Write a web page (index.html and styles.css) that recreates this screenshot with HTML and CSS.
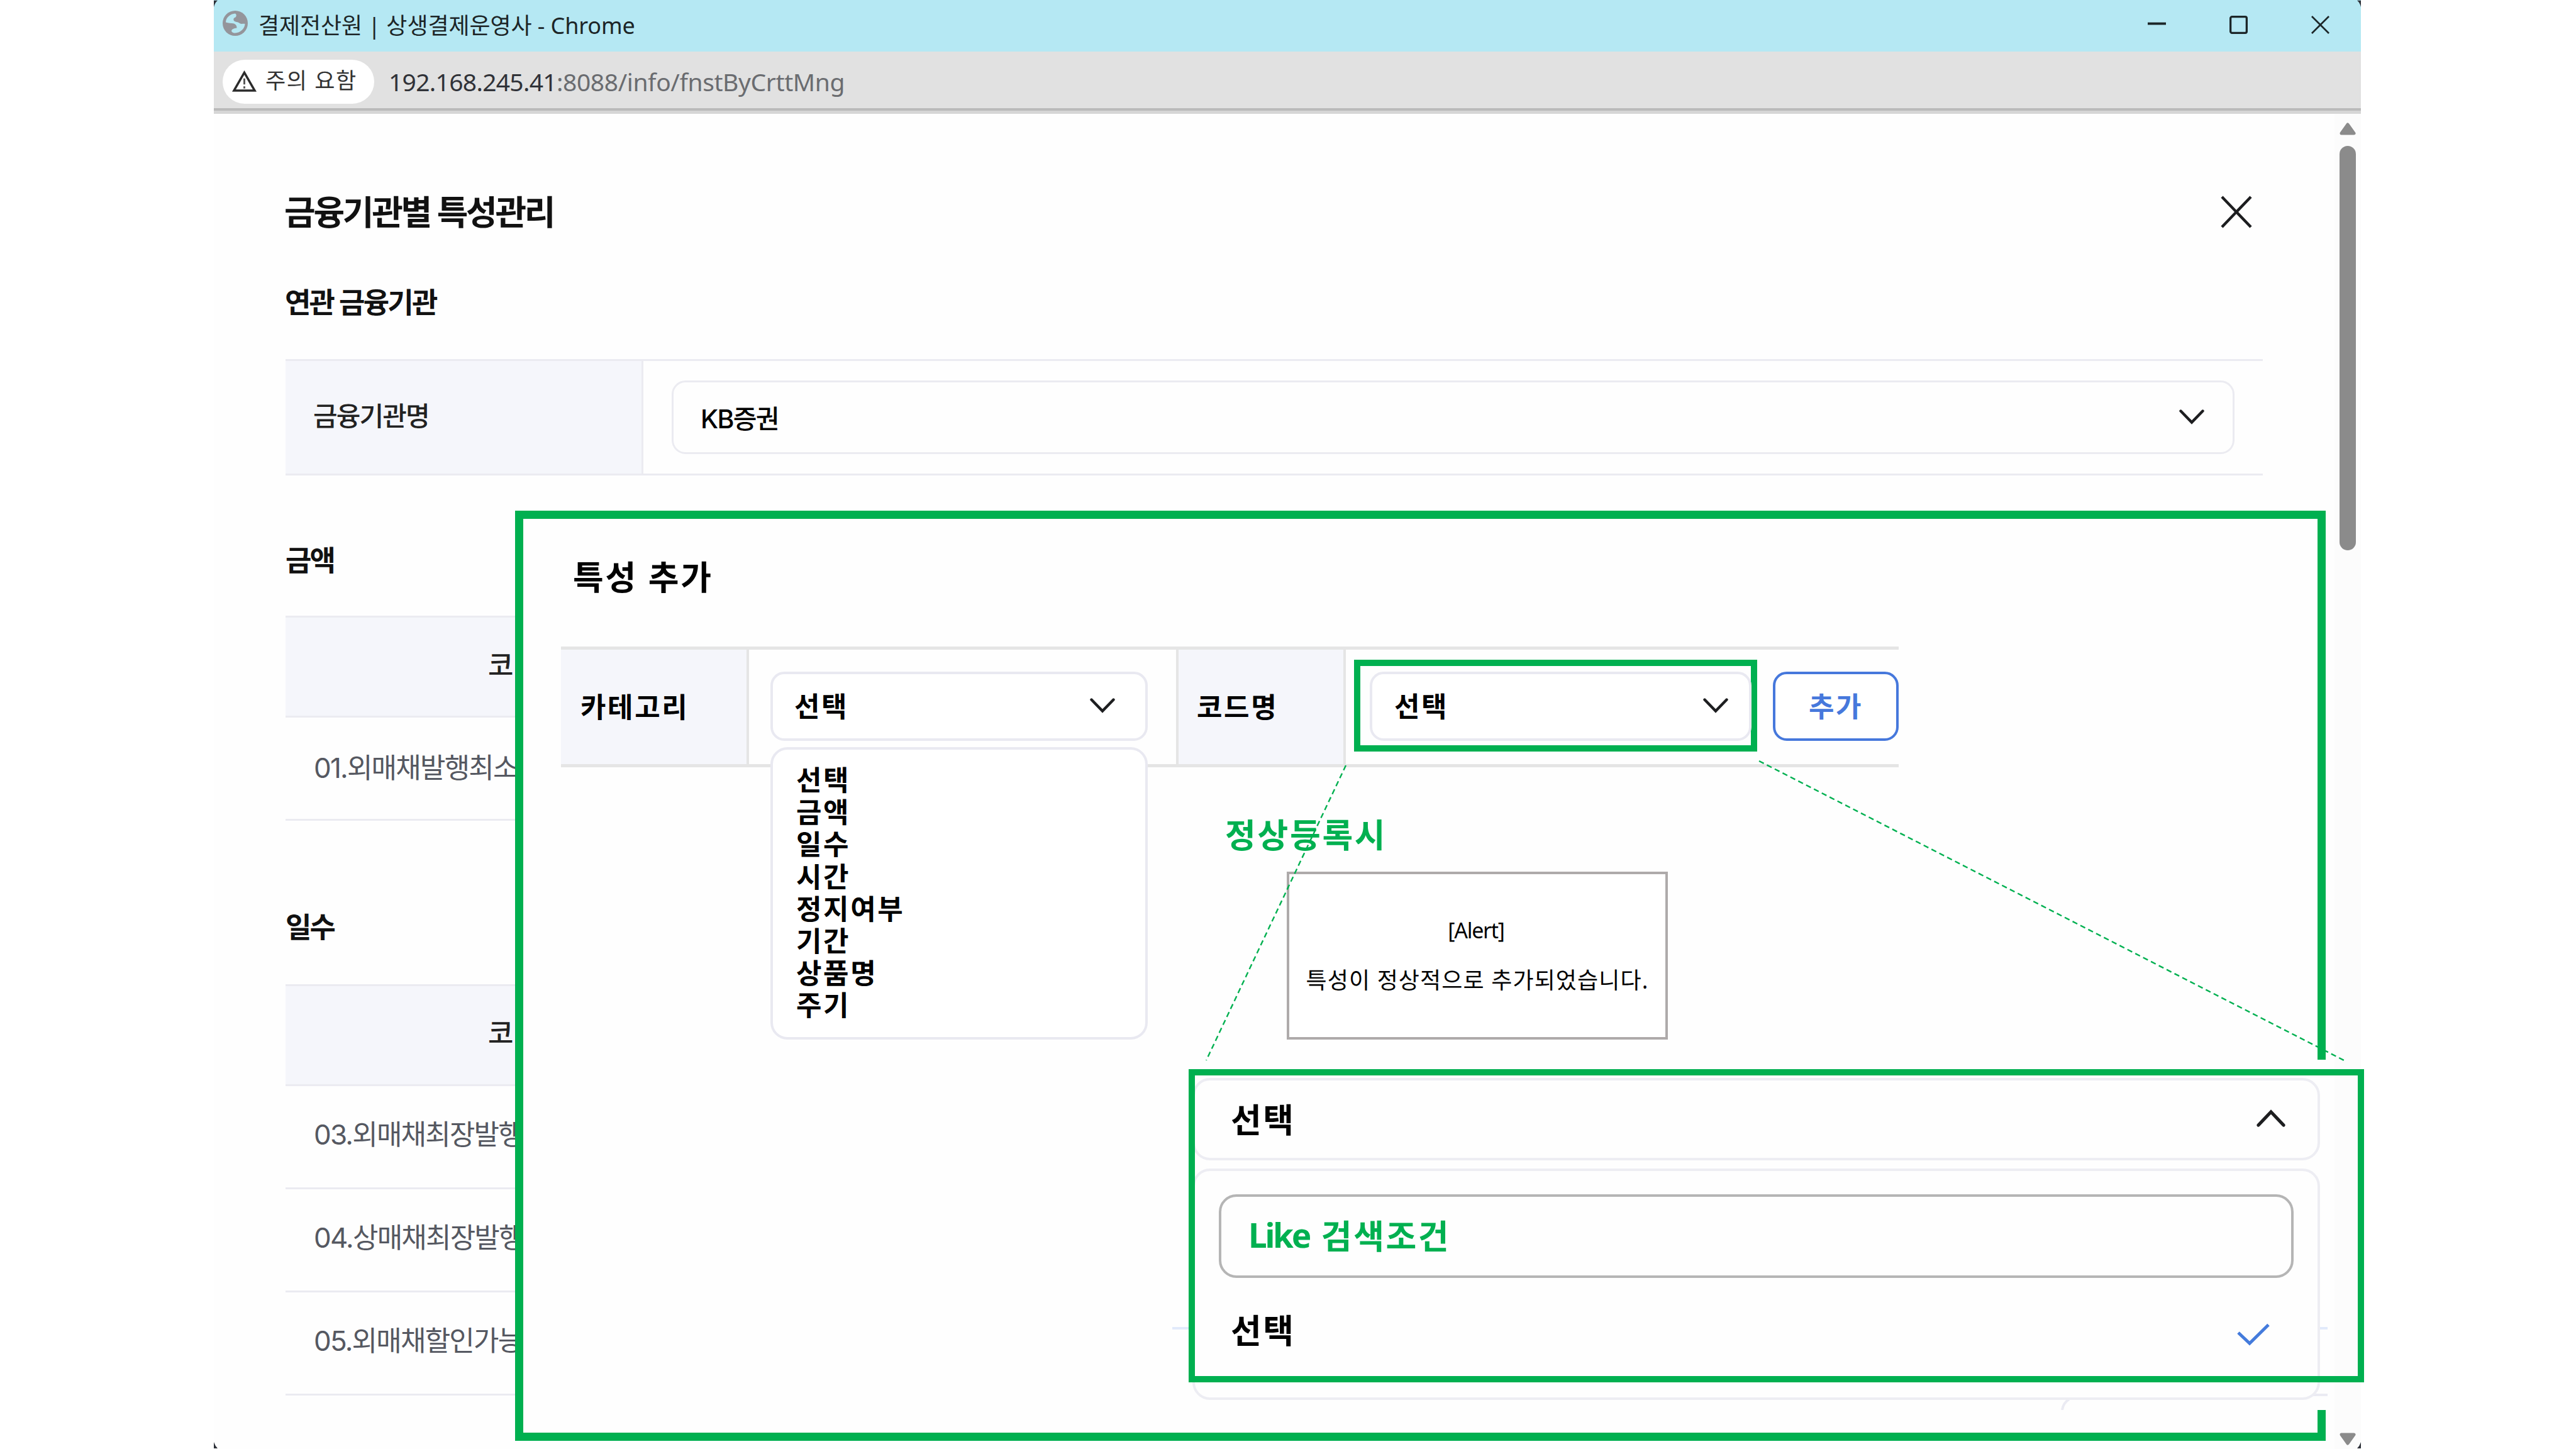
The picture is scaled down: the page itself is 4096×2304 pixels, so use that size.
FILE: index.html
```
<!DOCTYPE html>
<html lang="ko">
<head>
    <meta charset="UTF-8">
    <title>결제전산원 | 상생결제운영사</title>
    <link rel="stylesheet" href="styles.css">
</head>
<body>
    <!-- Browser window -->
    <div class="window">
        <div class="title-bar">
            <svg class="globe" viewBox="0 0 40 40"><circle cx="20" cy="20" r="20" fill="#94959b"/><path d="M20 4.5C12 5 5 11 5 18.5C9 20 14 19.5 18 20.5C22 22 22.500 25 22.500 27.500C18 28 14.500 29 14 32.500C15 35 18 35.500 20 35.500C28 35 35 29 35.500 21C33 20 30 22 27 20C25 17.500 20 18.500 18 16C16.500 13 18 11 20.500 10.500C22 9 22.500 6 20 4.500Z" fill="#b5e8f3"/></svg>
            <span class="window-title">결제전산원 | 상생결제운영사 - Chrome</span>
            <div class="controls">
                <svg viewBox="0 0 30 30"><path d="M0 13H30" stroke-width="4"/></svg>
                <svg viewBox="0 0 30 30"><rect x="1.7" y="1.7" width="26.6" height="26.6" rx="2.5" stroke-width="3.4"/></svg>
                <svg viewBox="0 0 30 30"><path d="M1 1L29 29M29 1L1 29" stroke-width="2.8"/></svg>
            </div>
        </div>
        <div class="address-bar">
            <div class="warn">
                <svg viewBox="0 0 40 35"><path d="M20 3.5L37 33H3Z" fill="none" stroke="#2b2b2b" stroke-width="3.6"/><path d="M20 13V23M20 26V29.5" stroke="#555" stroke-width="3"/></svg>
                <span>주의 요함</span>
            </div>
            <span class="url"><span class="host">192.168.245.41</span><span class="path">:8088/info/fnstByCrttMng</span></span>
        </div>
        <div class="content">
            <div class="page">
                <div class="page-head">
                    <h1>금융기관별 특성관리</h1>
                    <svg class="close" viewBox="0 0 50 52"><path d="M2 2L48 50M48 2L2 50"/></svg>
                </div>
                <h2 class="related">연관 금융기관</h2>
                <div class="form-row">
                    <div class="label">금융기관명</div>
                    <div class="field">
                        <div class="select-box">
                            <span>KB증권</span>
                            <svg class="chevron" viewBox="0 0 40 24"><path d="M2.5 2.5L20 20.5L37.5 2.5"/></svg>
                        </div>
                    </div>
                </div>
                <h2 class="amount">금액</h2>
                <div class="table">
                    <div class="th">코</div>
                    <div class="td">01.외매채발행최소</div>
                </div>
                <h2 class="days">일수</h2>
                <div class="table">
                    <div class="th">코</div>
                    <div class="td">03.외매채최장발행</div>
                    <div class="td">04.상매채최장발행</div>
                    <div class="td">05.외매채할인가능</div>
                </div>
            </div>
            <div class="scrollbar">
                <svg class="arrow" viewBox="0 0 26 20"><path d="M13 3L23 17H3Z"/></svg>
                <div class="thumb"></div>
                <svg class="arrow down" viewBox="0 0 26 20"><path d="M13 17L23 3H3Z"/></svg>
            </div>
        </div>
        <svg class="corner tl" viewBox="0 0 8 14"><path d="M0 0H8Q2 5 0 14Z"/></svg>
        <svg class="corner tr" viewBox="0 0 8 14"><path d="M8 0H0Q6 5 8 14Z"/></svg>
        <svg class="corner bl" viewBox="0 0 6 10"><path d="M0 10H6Q2 6 0 0Z"/></svg>
        <svg class="corner br" viewBox="0 0 6 10"><path d="M6 10H0Q4 6 6 0Z"/></svg>
    </div>

    <!-- Add characteristic panel -->
    <div class="panel">
        <h3>특성 추가</h3>
        <div class="add-row">
            <div class="cell-label category">카테고리</div>
            <div class="cell category-field">
                <div class="select">
                    <span>선택</span>
                    <svg class="chevron" viewBox="0 0 40 24"><path d="M2.5 2.5L20 20.5L37.5 2.5"/></svg>
                </div>
                <ul class="menu">
                    <li>선택</li>
                    <li>금액</li>
                    <li>일수</li>
                    <li>시간</li>
                    <li>정지여부</li>
                    <li>기간</li>
                    <li>상품명</li>
                    <li>주기</li>
                </ul>
            </div>
            <div class="cell-label code">코드명</div>
            <div class="cell code-field">
                <div class="highlight">
                    <div class="select">
                        <span>선택</span>
                        <svg class="chevron" viewBox="0 0 40 24"><path d="M2.5 2.5L20 20.5L37.5 2.5"/></svg>
                    </div>
                </div>
                <button class="add">추가</button>
            </div>
        </div>
        <p class="note">정상등록시</p>
        <div class="alert">
            <p class="alert-title">[Alert]</p>
            <p>특성이 정상적으로 추가되었습니다.</p>
        </div>
    </div>

    <!-- Enlarged code dropdown -->
    <div class="detail">
        <svg class="leftover" viewBox="0 0 1837 557"><path d="M0 427H40M1800 427H1837" stroke="#e2eafb"/><path d="M1800 533H1837M1415 557Q1417 545 1426 540" stroke="#ebebf3"/></svg>
        <div class="detail-select">
            <span>선택</span>
            <svg class="chevron-up" viewBox="0 0 46 28"><path d="M3 25L23 4L43 25"/></svg>
        </div>
        <div class="detail-menu">
            <div class="search"><span class="like">Like </span>검색조건</div>
            <div class="option">
                <span>선택</span>
                <svg class="check" viewBox="0 0 52 36"><path d="M2 15L20 32L50 2.5"/></svg>
            </div>
        </div>
        <div class="detail-frame"></div>
    </div>

    <svg class="guides" viewBox="0 0 4096 2304"><path d="M2140 1217L1918 1686M2797 1210L3727 1686"/></svg>
</body>
</html>
```

FILE: styles.css
```
* {
    box-sizing: border-box;
}

body {
    position: relative;
    width: 4096px;
    height: 2304px;
    margin: 0;
    overflow: hidden;
    background: #fff;
    color: #000;
    font-family: "Noto Sans", "Noto Sans CJK KR", sans-serif;
}

h1, h2, h3, p, ul {
    margin: 0;
    padding: 0;
}

svg {
    display: block;
    flex-shrink: 0;
}

/* Browser window */
.window {
    position: relative;
    width: 3414px;
    height: 2304px;
    margin-left: 340px;
    background: #fefefe;
    display: flex;
    flex-direction: column;
}

.title-bar {
    height: 82px;
    padding: 0 50px 8px 14px;
    display: flex;
    align-items: center;
    background: #b5e8f3;
}

.globe {
    width: 40px;
    height: 40px;
}

.window-title {
    margin-left: 17px;
    margin-top: 7px;
    font-size: 36px;
    line-height: 50px;
    letter-spacing: -0.1px;
    color: #1c2527;
}

.controls {
    margin-left: auto;
    margin-top: 5px;
    display: flex;
    gap: 101px;
}

.controls svg {
    width: 29px;
    height: 29px;
    fill: none;
    stroke: #1c2628;
}

.address-bar {
    height: 99px;
    padding: 13px 0 0 14px;
    display: flex;
    align-items: flex-start;
    background: #e1e1e1;
    border-bottom: 5px solid #d6d6d6;
    box-shadow: inset 0 -4px #bababa;
}

.warn {
    width: 241px;
    height: 70px;
    padding: 0 0 4px 15px;
    display: flex;
    align-items: center;
    border-radius: 35px;
    background: #fff;
}

.warn svg {
    width: 39px;
    height: 34px;
    margin-top: 2px;
}

.warn span {
    margin-left: 14px;
    font-size: 35px;
    line-height: 50px;
    letter-spacing: 1.6px;
    color: #333;
    white-space: nowrap;
}

.url {
    margin-left: 23px;
    font-size: 39px;
    line-height: 70px;
    color: #6a6c70;
}

.host {
    color: #303238;
    letter-spacing: -0.7px;
}

.path {
    letter-spacing: -0.4px;
}

.content {
    flex: 1;
    display: flex;
}

.page {
    width: 3258px;
    padding: 126px 0 0 114px;
}

.page-head {
    display: flex;
    justify-content: space-between;
    padding-right: 17px;
}

h1 {
    margin-left: -2px;
    font-size: 54px;
    line-height: 60px;
    letter-spacing: -3.3px;
    color: #111;
}

.close {
    width: 50px;
    height: 52px;
    margin-top: 4px;
    fill: none;
    stroke: #1c1d1f;
    stroke-width: 4.4;
}

h2 {
    font-size: 45px;
    line-height: 50px;
    letter-spacing: -2.8px;
    color: #111;
}

.related {
    margin: 89px 0 65px -1px;
}

.amount {
    margin: 110px 0 63px;
}

.days {
    margin: 144px 0 66px;
}

.form-row {
    height: 185px;
    display: flex;
    border-top: 3px solid #ebebf1;
    border-bottom: 3px solid #ebebf1;
}

.label {
    width: 569px;
    padding: 0 0 10px 44px;
    display: flex;
    align-items: center;
    background: #f5f6fb;
    border-right: 3px solid #ebebf1;
    font-size: 42px;
    font-weight: 500;
    letter-spacing: -1.9px;
    color: #222;
}

.field {
    flex: 1;
    padding: 31px 45px 31px;
}

.select-box {
    height: 117px;
    padding: 0 45px 1px 43px;
    display: flex;
    align-items: center;
    justify-content: space-between;
    border: 3px solid #ebebf1;
    border-radius: 22px;
    font-family: "Inter", "Noto Sans CJK KR", sans-serif;
    font-size: 41px;
    font-weight: 500;
    letter-spacing: -1.7px;
}

.chevron {
    width: 40px;
    height: 24px;
    fill: none;
    stroke: #1d1e20;
    stroke-width: 4.4;
    stroke-linecap: round;
}

.select-box .chevron {
    margin-top: -1px;
}

.table {
    width: 3144px;
    border-top: 3px solid #ebebf1;
    font-family: "Inter", "Noto Sans CJK KR", sans-serif;
    letter-spacing: -1.8px;
}

.th {
    height: 159px;
    padding: 0 0 10px 322px;
    display: flex;
    align-items: center;
    background: #f5f6fb;
    border-bottom: 3px solid #ebebf1;
    font-size: 44px;
    font-weight: 500;
    color: #222;
}

.td {
    height: 164px;
    padding: 0 0 8px 45px;
    display: flex;
    align-items: center;
    border-bottom: 3px solid #ebebf1;
    font-size: 44px;
    color: #555861;
}

.days + .table .th,
.days + .table .td {
    padding-bottom: 13px;
}

/* Scrollbar */
.scrollbar {
    width: 42px;
    margin-left: auto;
    padding: 14px 8px 6px;
    display: flex;
    flex-direction: column;
    background: #fcfcfc;
}

.arrow {
    width: 26px;
    height: 20px;
    fill: #8b8b8b;
    stroke: #8b8b8b;
    stroke-width: 5;
    stroke-linejoin: round;
}

.thumb {
    height: 643px;
    margin-top: 17px;
    border-radius: 13px;
    background: #8b8b8b;
}

.down {
    margin-top: auto;
}

.corner {
    position: absolute;
    width: 6px;
    height: 12px;
    fill: #2c3038;
}

.tl { top: 0; left: 0; }
.tr { top: 0; right: 0; }
.bl { bottom: 0; left: 0; }
.br { bottom: 0; right: 0; }

/* Add panel, lies over the page */
.panel {
    position: absolute;
    left: 819px;
    top: 812px;
    width: 2879px;
    height: 1479px;
    padding: 63px 0 0 60px;
    border: 13px solid #00b050;
    background: #fefefe;
}

h3 {
    padding-left: 19px;
    font-size: 53px;
    line-height: 60px;
    letter-spacing: 2.8px;
}

.add-row {
    width: 2127px;
    height: 192px;
    margin-top: 80px;
    display: flex;
    border-top: 5px solid #e5e5e5;
    border-bottom: 5px solid #e5e5e5;
    font-size: 44px;
    font-weight: 700;
    letter-spacing: 2.6px;
}

.cell-label {
    padding: 0 0 5px 31px;
    display: flex;
    align-items: center;
    background: #f5f6fb;
    border-right: 4px solid #e5e5e5;
}

.category {
    width: 299px;
}

.category-field {
    position: relative;
    width: 679px;
    padding: 35px 0 0 34px;
}

.code {
    width: 270px;
    padding-left: 29px;
    border-left: 4px solid #e5e5e5;
}

.code-field {
    flex: 1;
    padding: 16px 0 0 13px;
    display: flex;
}

.select {
    width: 600px;
    height: 110px;
    padding: 0 48px 4px 34px;
    display: flex;
    align-items: center;
    justify-content: space-between;
    border: 4px solid #e9e9f1;
    border-radius: 22px;
    background: #fff;
}

.select .chevron {
    margin-top: 2px;
}

.menu {
    position: absolute;
    left: 34px;
    top: 155px;
    width: 600px;
    height: 465px;
    padding: 23px 37px;
    border: 4px solid #e9e9f1;
    border-radius: 27px;
    background: #fff;
    list-style: none;
    line-height: 51.2px;
}

.highlight {
    width: 641px;
    height: 146px;
    padding: 9px 0 0 15px;
    border: 10px solid #00b050;
}

.highlight .select {
    width: 607px;
    padding: 0 33px 4px 35px;
}

.add {
    width: 200px;
    height: 110px;
    margin: 19px 0 0 25px;
    padding: 0 0 5px;
    border: 4px solid #4678dc;
    border-radius: 22px;
    background: #fff;
    color: #4678dc;
    font: inherit;
    letter-spacing: inherit;
}

.note {
    margin: 78px 0 0 1056px;
    font-size: 53px;
    font-weight: 700;
    line-height: 60px;
    letter-spacing: 2.7px;
    color: #00b050;
}

.alert {
    width: 606px;
    height: 267px;
    margin: 28px 0 0 1154px;
    padding-top: 49px;
    border: 4px solid #aeaaaa;
    background: #fff;
    text-align: center;
    font-size: 36px;
    line-height: 80px;
    letter-spacing: 1.1px;
    white-space: nowrap;
}

.alert-title {
    padding-right: 4px;
    font-size: 34px;
    letter-spacing: -1.3px;
}

/* Dropdown detail, lies over the panel and the page */
.detail {
    position: absolute;
    left: 1864px;
    top: 1685px;
    width: 1837px;
    height: 557px;
    padding: 29px 12px 0 32px;
    background: #fefefe;
    font-size: 53px;
    font-weight: 700;
    letter-spacing: 2.6px;
}

.leftover {
    position: absolute;
    left: 0;
    top: 0;
    width: 1837px;
    height: 557px;
    fill: none;
    stroke-width: 4;
}

.detail-select {
    position: relative;
    height: 131px;
    padding: 0 51px 3px 57px;
    display: flex;
    align-items: center;
    justify-content: space-between;
    border: 4px solid #ededf3;
    border-radius: 28px;
}

.chevron-up {
    width: 46px;
    height: 28px;
    fill: none;
    stroke: #1d1e20;
    stroke-width: 5.2;
    stroke-linecap: round;
}

.detail-menu {
    position: relative;
    height: 368px;
    margin-top: 13px;
    padding: 37px 38px 0;
    border: 4px solid #ededf3;
    border-radius: 28px;
    background: #fefefe;
}

.search {
    height: 133px;
    padding: 0 0 4px 43px;
    display: flex;
    align-items: center;
    border: 4px solid #b5b5b5;
    border-radius: 28px;
    color: #00b050;
    white-space: pre;
}

.like {
    letter-spacing: -3.2px;
    word-spacing: 8px;
}

.option {
    padding: 48px 38px 0 19px;
    display: flex;
    align-items: center;
    justify-content: space-between;
    line-height: 72px;
}

.check {
    width: 52px;
    height: 36px;
    margin-top: 11px;
    fill: none;
    stroke: #447bdc;
    stroke-width: 5;
}

.detail-frame {
    position: absolute;
    left: 26px;
    top: 15px;
    width: 1869px;
    height: 498px;
    border: 10px solid #00b050;
}

/* Dashed lines from the select to its detail */
.guides {
    position: absolute;
    left: 0;
    top: 0;
    width: 4096px;
    height: 2304px;
    fill: none;
    stroke: #00b050;
    stroke-width: 2.4;
    stroke-dasharray: 8.5 5.5;
}
```
